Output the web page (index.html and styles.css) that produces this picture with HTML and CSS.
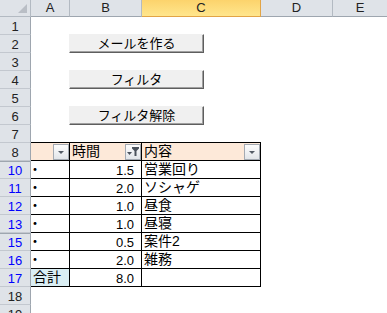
FILE: index.html
```html
<!DOCTYPE html>
<html lang="ja">
<head>
    <meta charset="UTF-8">
    <meta name="viewport" content="width=device-width, initial-scale=1.0">
    <link rel="stylesheet" href="styles.css">
    <title>作業時間</title>
</head>
<body>
    <div class="sheet">
        <div class="corner"><span class="corner-mark"></span></div>
        <div class="col-head">A</div>
        <div class="col-head">B</div>
        <div class="col-head selected">C</div>
        <div class="col-head">D</div>
        <div class="col-head last">E</div>

        <div class="row-head">1</div><div class="blank"></div>
        <div class="row-head">2</div><div class="blank"><button class="macro-btn">メールを作る</button></div>
        <div class="row-head">3</div><div class="blank"></div>
        <div class="row-head">4</div><div class="blank"><button class="macro-btn">フィルタ</button></div>
        <div class="row-head">5</div><div class="blank"></div>
        <div class="row-head">6</div><div class="blank"><button class="macro-btn">フィルタ解除</button></div>
        <div class="row-head">7</div><div class="blank"></div>

        <!-- table header -->
        <div class="row-head">8</div>
        <div class="cell head-cell"><span class="label"></span><span class="dd"></span></div>
        <div class="cell head-cell"><span class="label">時間</span><span class="dd active"><svg width="14" height="14" viewBox="0 0 14 14"><path d="M1 7h5l-2.5 3z" fill="#4b525c"/><path d="M6 2h7v1.5l-2.5 2.5v5h-2v-5l-2.5-2.5z" fill="#4b525c"/></svg></span></div>
        <div class="cell head-cell"><span class="label">内容</span><span class="dd"></span></div>
        <div class="side"></div>

        <div class="row-head shown after-hidden">10</div>
        <div class="cell"><span class="bullet">・</span></div>
        <div class="cell num">1.5</div>
        <div class="cell text">営業回り</div>
        <div class="side"></div>

        <div class="row-head shown">11</div>
        <div class="cell"><span class="bullet">・</span></div>
        <div class="cell num">2.0</div>
        <div class="cell text">ソシャゲ</div>
        <div class="side"></div>

        <div class="row-head shown">12</div>
        <div class="cell"><span class="bullet">・</span></div>
        <div class="cell num">1.0</div>
        <div class="cell text">昼食</div>
        <div class="side"></div>

        <div class="row-head shown">13</div>
        <div class="cell"><span class="bullet">・</span></div>
        <div class="cell num">1.0</div>
        <div class="cell text">昼寝</div>
        <div class="side"></div>

        <div class="row-head shown after-hidden">15</div>
        <div class="cell"><span class="bullet">・</span></div>
        <div class="cell num">0.5</div>
        <div class="cell text">案件2</div>
        <div class="side"></div>

        <div class="row-head shown">16</div>
        <div class="cell"><span class="bullet">・</span></div>
        <div class="cell num">2.0</div>
        <div class="cell text">雑務</div>
        <div class="side"></div>

        <div class="row-head shown">17</div>
        <div class="cell text total">合計</div>
        <div class="cell num">8.0</div>
        <div class="cell text"></div>
        <div class="side"></div>

        <div class="row-head">18</div><div class="blank"></div>
        <div class="row-head">19</div><div class="blank"></div>
    </div>
</body>
</html>
```

FILE: styles.css
```css
html, body {
    overflow: hidden;
}

body {
    margin: 0;
    background: #fff;
    font-family: "Liberation Sans", "Noto Sans CJK JP", sans-serif;
    color: #000;
}

.sheet {
    display: grid;
    grid-template-columns: 31px 39px 72px 119px 72px 54px;
    grid-template-rows: 17px;
    grid-auto-rows: 18px;
    width: 387px;
}

/* headers */
.corner, .col-head, .row-head {
    box-sizing: border-box;
    background: #dfe3e8;
    border-right: 1px solid #b3bac2;
    border-bottom: 1px solid #b3bac2;
    color: #222;
    font-size: 13px;
}

.corner {
    display: flex;
    justify-content: flex-end;
    align-items: flex-end;
    padding: 0 3px 3px 0;
}

.corner-mark {
    width: 0;
    height: 0;
    border-left: 9px solid transparent;
    border-bottom: 9px solid #b9bec5;
}

.col-head {
    text-align: center;
    line-height: 16px;
    border-bottom-color: #9ea6af;
}

.col-head.selected {
    background: linear-gradient(#fcd36c, #ffe68d);
    border-right-color: #e2a446;
    border-bottom-color: #e2a446;
}

.col-head.last {
    border-right: none;
}

.row-head {
    text-align: center;
    padding-top: 2px;
    line-height: 16px;
    border-right-color: #9ea6af;
    border-bottom-color: #c3c8cf;
}

.row-head.shown {
    color: #0000ff;
}

.row-head.after-hidden {
    box-shadow: inset 0 1px 0 #9ea6af;
}

.blank {
    grid-column: 2 / -1;
}

.side {
    grid-column: span 2;
}

/* form buttons */
.macro-btn {
    display: block;
    box-sizing: border-box;
    width: 135px;
    height: 19px;
    margin: -1px 0 0 38px;
    padding: 0;
    background: #f0f0f0;
    border: 1px solid;
    border-color: #f0f0f0 #5e5e5e #5e5e5e #f0f0f0;
    box-shadow: inset -1px -1px 0 #a0a0a0;
    font-family: "Liberation Sans", "Noto Sans CJK JP", sans-serif;
    font-size: 13px;
    line-height: 16px;
    color: #000;
}

/* table */
.cell {
    box-sizing: border-box;
    border-right: 1px solid #000;
    border-bottom: 1px solid #000;
    font-size: 14px;
    line-height: 16px;
    white-space: nowrap;
}

.num {
    font-size: 13px;
    text-align: right;
    padding: 2px 7px 0 0;
}

.text {
    padding-left: 2px;
}

.bullet {
    margin-left: -3px;
}

.total {
    background: #daeef3;
}

.head-cell {
    display: flex;
    align-items: flex-start;
    background: #fde9d9;
    box-shadow: 0 -1px 0 #000;
}

.head-cell .label {
    flex: 1;
    padding-left: 2px;
}

.dd {
    box-sizing: border-box;
    width: 16px;
    height: 16px;
    margin-top: 1px;
    border: 1px solid #a4aab2;
    background: linear-gradient(#fdfdfd, #e2e5e9);
    display: flex;
    align-items: center;
    justify-content: center;
}

.dd::after {
    content: "";
    border-left: 3px solid transparent;
    border-right: 3px solid transparent;
    border-top: 3px solid #555c66;
    margin-top: 1px;
}

.dd.active::after {
    display: none;
}
```
